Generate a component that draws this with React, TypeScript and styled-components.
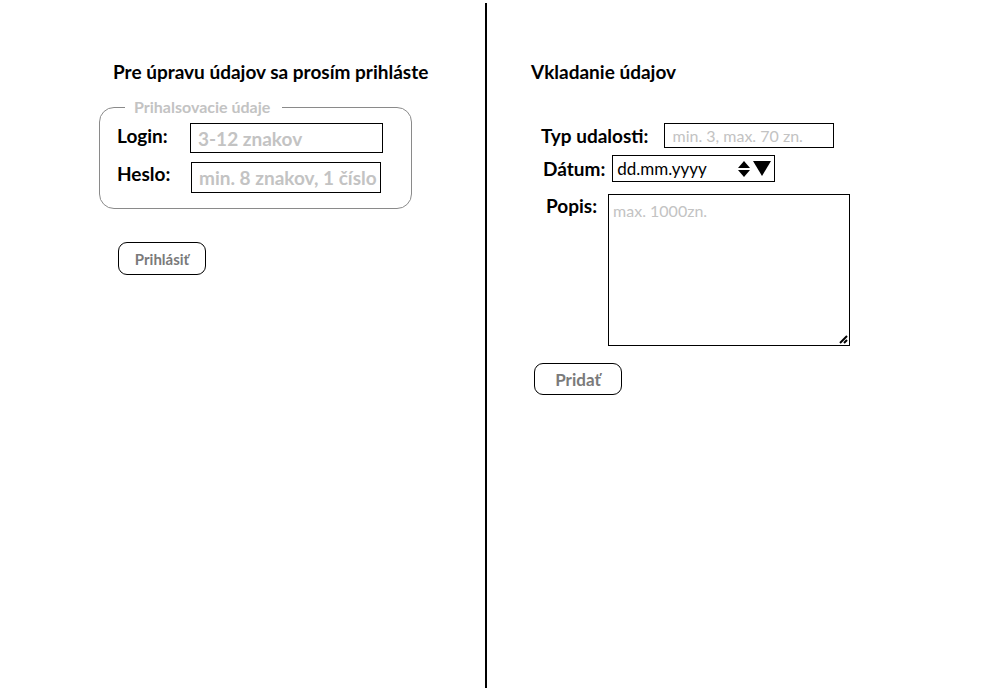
import styled, { createGlobalStyle } from "styled-components";

const Global = createGlobalStyle`
  html, body {
    margin: 0;
    padding: 0;
    background: #fff;
    font-family: Lato, "Open Sans", sans-serif;
  }
`;

// <styled>
const Page = styled.div`
  display: flex;
  width: 1000px;
  height: 700px;
`;

const LeftCol = styled.div`
  width: 485px;
  padding-top: 60px;
  box-sizing: border-box;
`;

const Divider = styled.div`
  width: 2px;
  margin: 3px 0 12px 0;
  background: #000;
`;

const RightCol = styled.div`
  flex: 1;
  padding-top: 60px;
  padding-left: 44px;
  box-sizing: border-box;
`;

const Title = styled.h1<{ $indent: number }>`
  margin: 0 0 0 ${(p) => p.$indent}px;
  font-size: 19px;
  font-weight: 700;
  color: #000;
  line-height: 24px;
`;

const Fieldset = styled.fieldset`
  margin: 15px 0 0 99px;
  width: 312px;
  height: 110px;
  box-sizing: border-box;
  border: 1px solid #8a8a8a;
  border-radius: 15px;
  padding: 8px 28px 0 17px;
  display: grid;
  grid-template-columns: 73px 1fr;
  row-gap: 9px;
  align-content: start;
`;

const Legend = styled.legend`
  margin-left: 8px;
  padding: 0 12px 0 9px;
  font-size: 16px;
  font-weight: 700;
  color: #c3c3c3;
  line-height: 16px;
`;

const Label = styled.label<{ $shift?: number }>`
  font-size: 19px;
  font-weight: 700;
  color: #000;
  padding-top: ${(p) => p.$shift ?? 0}px;
  white-space: nowrap;
`;

const TextBox = styled.div<{ $w: number; $h: number; $bold?: boolean; $size: number; $ml?: number }>`
  width: ${(p) => p.$w}px;
  height: ${(p) => p.$h}px;
  margin-left: ${(p) => p.$ml ?? 0}px;
  box-sizing: border-box;
  border: 1px solid #000;
  display: flex;
  align-items: center;
  padding-left: 7px;
  font-size: ${(p) => p.$size}px;
  font-weight: ${(p) => (p.$bold ? 700 : 400)};
  color: #c3c3c3;
  white-space: nowrap;
  overflow: hidden;
`;

const PillButton = styled.button<{ $size: number; $w: number; $h: number; $ml: number; $mt: number }>`
  display: block;
  margin: ${(p) => p.$mt}px 0 0 ${(p) => p.$ml}px;
  width: ${(p) => p.$w}px;
  height: ${(p) => p.$h}px;
  border: 1px solid #000;
  border-radius: 9px;
  background: #fff;
  font-family: inherit;
  font-size: ${(p) => p.$size}px;
  font-weight: 700;
  color: #7a7a7a;
  padding: 0;
`;

const Form = styled.div`
  margin-top: 39px;
`;

const Row = styled.div<{ $mt: number; $gap: number; $ml: number; $top?: boolean }>`
  display: flex;
  align-items: ${(p) => (p.$top ? "flex-start" : "center")};
  gap: ${(p) => p.$gap}px;
  margin: ${(p) => p.$mt}px 0 0 ${(p) => p.$ml}px;
`;

const DateBox = styled.div`
  width: 163px;
  height: 27px;
  box-sizing: border-box;
  border: 1px solid #000;
  display: flex;
  align-items: center;
  justify-content: space-between;
  padding: 0 1px 0 4px;
  font-size: 17px;
  color: #000;
`;

const Area = styled.div`
  position: relative;
  width: 242px;
  height: 152px;
  box-sizing: border-box;
  border: 1px solid #000;
  padding: 6px 0 0 4px;
  font-size: 16px;
  color: #c3c3c3;
`;

const Grip = styled.svg`
  position: absolute;
  right: 1px;
  bottom: 1px;
`;
// </styled>

function Spinner() {
  return (
    <svg width="36" height="20" viewBox="0 0 36 20">
      <polygon points="1,9 7,2 13,9" fill="#000" />
      <polygon points="1,11 7,18 13,11" fill="#000" />
      <polygon points="16,2 34,2 25,17" fill="#000" />
    </svg>
  );
}

export default function App() {
  return (
    <>
      <Global />
      <Page>
        <LeftCol>
          <Title $indent={113}>Pre úpravu údajov sa prosím prihláste</Title>
          <Fieldset>
            <Legend>Prihalsovacie údaje</Legend>
            <Label $shift={1}>Login:</Label>
            <TextBox $w={193} $h={30} $bold $size={19}>3-12 znakov</TextBox>
            <Label $shift={0}>Heslo:</Label>
            <TextBox $w={190} $h={31} $bold $size={19} $ml={1}>
              min. 8 znakov, 1 číslo
            </TextBox>
          </Fieldset>
          <PillButton $size={15} $w={88} $h={33} $ml={118} $mt={33}>
            Prihlásiť
          </PillButton>
        </LeftCol>
        <Divider />
        <RightCol>
          <Title $indent={0}>Vkladanie údajov</Title>
          <Form>
            <Row $mt={0} $gap={16} $ml={10}>
              <Label>Typ udalosti:</Label>
              <TextBox $w={170} $h={25} $size={16}>min. 3, max. 70 zn.</TextBox>
            </Row>
            <Row $mt={7} $gap={7} $ml={12}>
              <Label>Dátum:</Label>
              <DateBox>
                dd.mm.yyyy
                <Spinner />
              </DateBox>
            </Row>
            <Row $mt={12} $gap={11} $ml={15} $top>
              <Label>Popis:</Label>
              <Area>
                max. 1000zn.
                <Grip width="10" height="10" viewBox="0 0 10 10">
                  <line x1="9" y1="2" x2="2" y2="9" stroke="#000" strokeWidth="2" />
                  <line x1="9" y1="6" x2="6" y2="9" stroke="#000" strokeWidth="2" />
                </Grip>
              </Area>
            </Row>
          </Form>
          <PillButton $size={17} $w={88} $h={32} $ml={3} $mt={17}>
            Pridať
          </PillButton>
        </RightCol>
      </Page>
    </>
  );
}
